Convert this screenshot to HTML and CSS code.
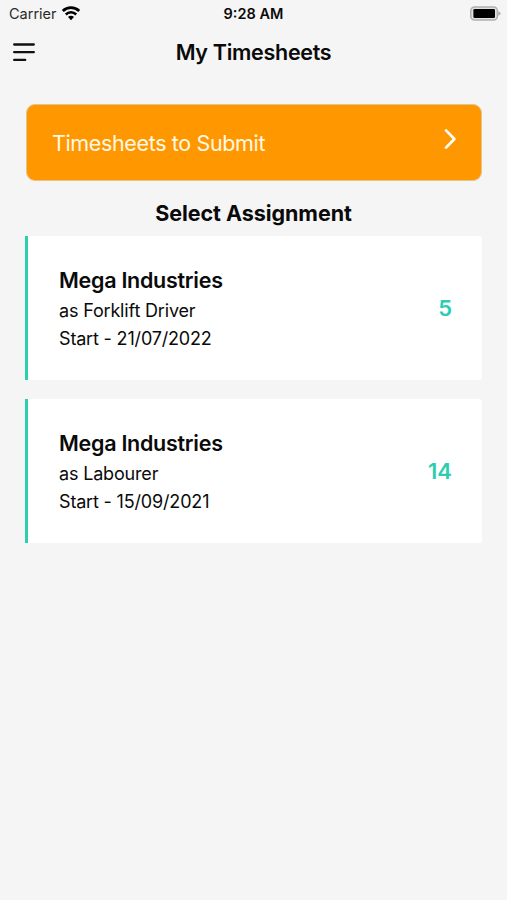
FILE: index.html
```html
<!DOCTYPE html>
<html lang="en">
  <head>
    <meta charset="UTF-8" />
    <meta name="viewport" content="width=device-width, initial-scale=1.0" />
    <title>My Timesheets</title>
    <link rel="stylesheet" href="styles.css">
  </head>
  <body>
    <!-- Status bar -->
    <div class="status-bar">
      <div class="carrier">
        <span class="carrier-name">Carrier</span>
        <svg width="20" height="15" viewBox="0 0 20 15">
          <path d="M1.8 5 A11.8 11.8 0 0 1 18.2 5" fill="none" stroke="#000" stroke-width="2.8" />
          <path d="M4.8 8.5 A7.3 7.3 0 0 1 15.2 8.5" fill="none" stroke="#000" stroke-width="2.5" />
          <path d="M10 14.2 L7 11.1 A4.2 4.2 0 0 1 13 11.1 Z" fill="#000" />
        </svg>
      </div>
      <span class="time">9:28 AM</span>
      <svg class="battery" width="31" height="15" viewBox="0 0 31 15">
        <rect x="0.8" y="1" width="26.6" height="13" rx="3.8" fill="#e2e2e2" stroke="#b0b0b0" stroke-width="1.5" />
        <rect x="3.4" y="3" width="21.6" height="9" rx="1.2" fill="#000" />
        <path d="M28.3 5.2 Q30.6 6 30.6 7.5 Q30.6 9 28.3 9.8 Z" fill="#aaa" />
      </svg>
    </div>

    <!-- Header -->
    <header class="header">
      <button class="menu-btn" type="button" aria-label="Menu">
        <svg width="24" height="20" viewBox="0 0 24 20" fill="none" stroke="#111" stroke-width="2.3" stroke-linecap="round">
          <path d="M2.2 2.5H21.8M2.2 10.2H21.8M2.2 17.9H13.2" />
        </svg>
      </button>
      <h1 class="title">My Timesheets</h1>
    </header>

    <main class="content">
      <button class="submit-btn" type="button">
        <span class="submit-label">Timesheets to Submit</span>
        <svg class="chevron" width="14" height="22" viewBox="0 0 14 22" fill="none" stroke="#fff" stroke-width="2.6" stroke-linecap="round" stroke-linejoin="round">
          <path d="M3 2.4L11.4 11L3 19.6" />
        </svg>
      </button>

      <h2 class="section-title">Select Assignment</h2>

      <div class="assignments">
        <div class="card">
          <div class="card-info">
            <h3 class="company">Mega Industries</h3>
            <p class="detail">as Forklift Driver</p>
            <p class="detail">Start - 21/07/2022</p>
          </div>
          <span class="count">5</span>
        </div>
        <div class="card">
          <div class="card-info">
            <h3 class="company">Mega Industries</h3>
            <p class="detail">as Labourer</p>
            <p class="detail">Start - 15/09/2021</p>
          </div>
          <span class="count">14</span>
        </div>
      </div>
    </main>
  </body>
</html>
```
FILE: styles.css
```css
* {
  box-sizing: border-box;
}
body {
  margin: 0;
  min-height: 100vh;
  background: #f5f5f5;
  color: #0a0a0a;
  font-family: Inter, "Liberation Sans", sans-serif;
}
h1,
h2,
h3,
p {
  margin: 0;
}
svg {
  display: block;
}
button {
  border: 0;
  padding: 0;
  background: none;
  font-family: inherit;
}

/* Status bar */
.status-bar {
  display: grid;
  grid-template-columns: 1fr auto 1fr;
  align-items: center;
  height: 27px;
  padding: 0 6px 0 9px;
}
.carrier {
  display: flex;
  align-items: center;
  gap: 4px;
}
.carrier-name {
  font-size: 14.5px;
  color: #2a2a2a;
}
.time {
  margin-right: 3px;
  font-size: 14.5px;
  font-weight: 600;
}
.battery {
  justify-self: end;
}

/* Header */
.header {
  display: grid;
  grid-template-columns: 1fr auto 1fr;
  align-items: center;
  height: 50px;
  padding: 0 12px;
}
.menu-btn {
  justify-self: start;
}
.title {
  font-size: 21.5px;
  font-weight: 600;
  line-height: 28px;
  letter-spacing: -0.3px;
}

.content {
  padding: 27px 25px 0;
}
.submit-btn {
  display: flex;
  align-items: center;
  justify-content: space-between;
  width: 456px;
  height: 77px;
  margin-left: 1px;
  padding: 0 24px 0 25px;
  border: 1px solid #e5c38c;
  border-radius: 9px;
  background: #ff9800;
  color: #fff8e6;
}
.submit-label {
  font-size: 21.5px;
  letter-spacing: -0.36px;
}
.chevron {
  margin-bottom: 8px;
}
.section-title {
  height: 55px;
  padding-top: 18px;
  font-size: 21.5px;
  font-weight: 700;
  line-height: 28px;
  letter-spacing: -0.05px;
  text-align: center;
}

/* Assignment cards */
.assignments {
  display: flex;
  flex-direction: column;
  gap: 19px;
}
.card {
  display: flex;
  align-items: center;
  justify-content: space-between;
  height: 144px;
  padding: 0 30px 0 31px;
  border-left: 3px solid #2dcdb0;
  border-radius: 0 3px 3px 0;
  background: #fff;
}
.company {
  margin-bottom: 1px;
  font-size: 21.5px;
  font-weight: 600;
  line-height: 32px;
  letter-spacing: -0.27px;
}
.detail {
  font-size: 18px;
  line-height: 28px;
  letter-spacing: -0.17px;
}
.count {
  color: #2dcdb0;
  font-size: 22px;
  font-weight: 600;
}
```
